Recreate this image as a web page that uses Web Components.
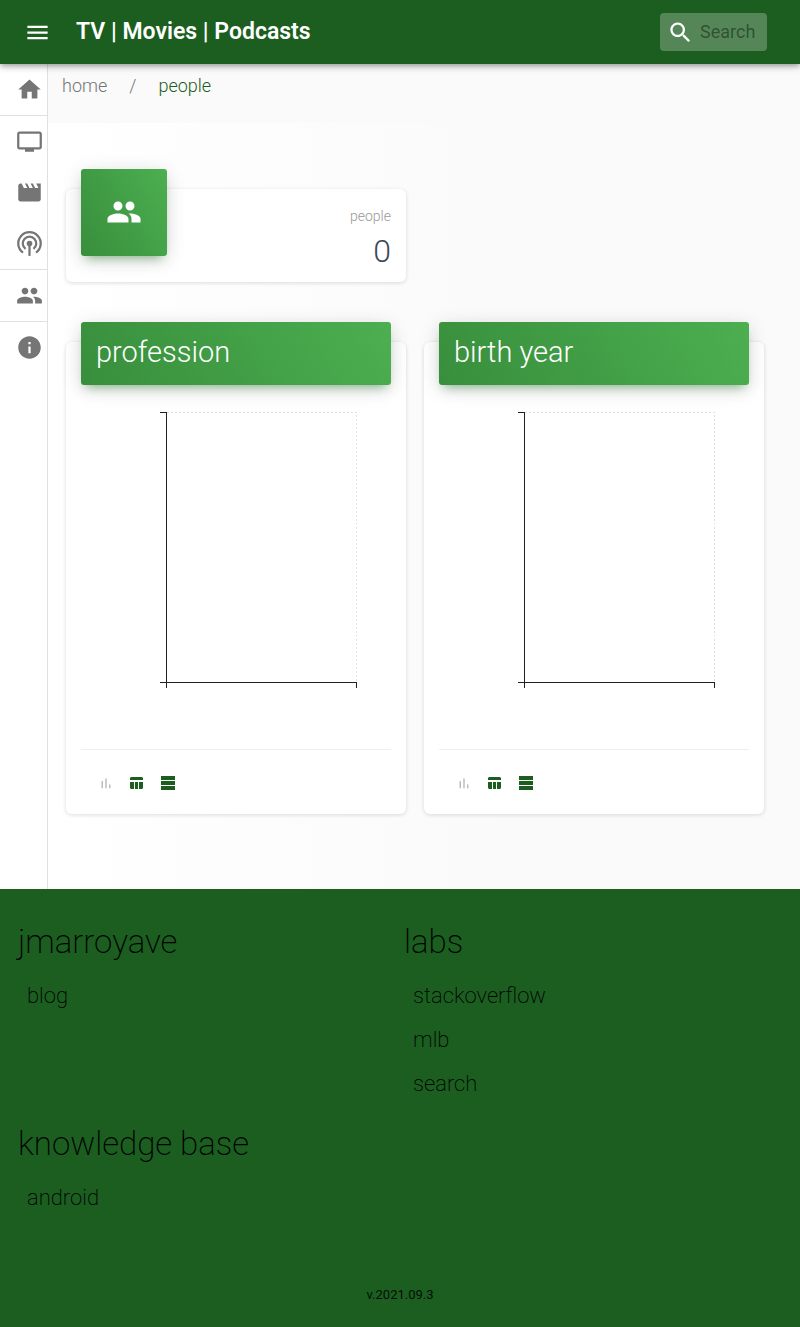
<!DOCTYPE html>
<html lang="en">
<head>
<meta charset="utf-8">
<meta name="viewport" content="width=device-width, initial-scale=1">
<title>TV | Movies | Podcasts</title>
<style>
  body { margin: 0; background: #fafafa; font-family: Roboto, sans-serif; font-weight: 300; --brand: #1b5e20; }
</style>
</head>
<body>
<media-app></media-app>
<script>
const ICONS = {
  menu: '<path d="M3 18h18v-2H3v2zm0-5h18v-2H3v2zm0-7v2h18V6H3z"/>',
  search: '<path d="M15.5 14h-.79l-.28-.27C15.41 12.59 16 11.11 16 9.5 16 5.91 13.09 3 9.5 3S3 5.91 3 9.5 5.91 16 9.5 16c1.61 0 3.09-.59 4.23-1.57l.27.28v.79l5 4.99L20.49 19l-4.99-5zm-6 0C7.01 14 5 11.99 5 9.5S7.01 5 9.5 5 14 7.01 14 9.5 11.99 14 9.5 14z"/>',
  home: '<path d="M10 20v-6h4v6h5v-8h3L12 3 2 12h3v8z"/>',
  tv: '<path d="M21 3H3c-1.1 0-2 .9-2 2v12c0 1.1.9 2 2 2h5v2h8v-2h5c1.1 0 1.99-.9 1.99-2L23 5c0-1.100-.9-2-2-2zm0 14H3V5h18v12z"/>',
  movie: '<path d="M18 4l2 4h-3l-2-4h-2l2 4h-3l-2-4H8l2 4H7L5 4H4c-1.100 0-1.990.9-1.990 2L2 18c0 1.100.9 2 2 2h16c1.100 0 2-.9 2-2V4h-4z"/>',
  podcast: '<g fill="none" stroke="currentColor" stroke-width="2"><path d="M6.200 20.100A10 10 0 1 1 17.800 20.100"/><path d="M8.500 16.800A6 6 0 1 1 15.500 16.800"/><path d="M12 13v10"/></g><circle cx="12" cy="12" r="2.500"/>',
  people: '<path d="M16 11c1.660 0 2.990-1.340 2.990-3S17.660 5 16 5c-1.660 0-3 1.340-3 3s1.340 3 3 3zm-8 0c1.660 0 2.990-1.340 2.990-3S9.660 5 8 5C6.340 5 5 6.340 5 8s1.340 3 3 3zm0 2c-2.330 0-7 1.170-7 3.500V19h14v-2.500c0-2.330-4.670-3.500-7-3.500zm8 0c-.290 0-.620.020-.970.050 1.160.840 1.970 1.970 1.970 3.450V19h6v-2.500c0-2.330-4.670-3.500-7-3.500z"/>',
  info: '<path d="M12 2C6.480 2 2 6.480 2 12s4.480 10 10 10 10-4.480 10-10S17.520 2 12 2zm1 15h-2v-6h2v6zm0-8h-2V7h2v2z"/>',
  bars: '<path d="M6 9.300h2V19H6zM11 6h2v13h-2zm5 8h2v5h-2z"/>',
  table: '<g transform="scale(1.3333)"><path d="M2 6V4.500C2 3.700 2.700 3 3.500 3h10c.8 0 1.500.7 1.500 1.500V6zM2 8h4v7H3.500C2.700 15 2 14.300 2 13.500zM7 8h3v7H7zM11 8h4v5.500c0 .8-.7 1.500-1.500 1.500H11z"/></g>',
  rows: '<g transform="scale(1.3333)"><path d="M2 2h14v4H2zM2 7h14v4H2zM2 12h14v4H2z"/></g>'
};

function define(name, html) {
  customElements.define(name, class extends HTMLElement {
    constructor() {
      super();
      this.attachShadow({ mode: 'open' }).innerHTML = typeof html === 'function' ? '' : html;
    }
    connectedCallback() {
      if (typeof html === 'function') this.shadowRoot.innerHTML = html(this);
    }
  });
}

define('md-icon', el => `
  <style>:host{display:block;width:var(--icon-size,24px);height:var(--icon-size,24px)} svg{display:block;width:100%;height:100%;fill:currentColor}</style>
  <svg viewBox="0 0 24 24" aria-hidden="true">${ICONS[el.getAttribute('name')]}</svg>`);

define('app-bar', `
  <style>
    :host{display:block;position:relative;z-index:2;background:var(--brand);color:#fff;
      box-shadow:0 2px 4px -1px rgba(0,0,0,.2),0 4px 5px 0 rgba(0,0,0,.14),0 1px 10px 0 rgba(0,0,0,.12)}
    header{display:flex;align-items:center;height:64px;padding:0 33px 0 24px;--icon-size:27px}
    button{border:0;background:none;color:inherit;padding:0;margin-right:25px;cursor:pointer}
    h1{margin:0;font-size:23px;line-height:32px;font-weight:600;flex:1;white-space:nowrap}
    label{display:flex;align-items:center;gap:6px;box-sizing:border-box;width:107px;height:38px;padding:0 7px;
      border-radius:4px;background:rgba(255,255,255,.25)}
    input{flex:1;min-width:0;border:0;outline:0;padding:0;background:none;color:inherit;font:400 18px/24px Roboto,sans-serif}
    input::placeholder{color:rgba(0,0,0,.42);opacity:1}
  </style>
  <header>
    <button aria-label="Open menu"><md-icon name="menu"></md-icon></button>
    <h1>TV | Movies | Podcasts</h1>
    <label><md-icon name="search"></md-icon><input type="text" placeholder="Search" aria-label="Search"></label>
  </header>`);

define('side-nav', `
  <style>
    :host{display:block;background:#fff;border-right:1px solid #e0e0e0;--icon-size:27px}
    ul{list-style:none;margin:0;padding:0}
    li.end{border-bottom:1px solid #e0e0e0}
    a{display:flex;align-items:center;height:51px;padding-left:16px;color:#757575}
  </style>
  <nav aria-label="Sections"><ul>
    <li class="end"><a href="#home" aria-label="home"><md-icon name="home"></md-icon></a></li>
    <li><a href="#tv" aria-label="tv"><md-icon name="tv"></md-icon></a></li>
    <li><a href="#movies" aria-label="movies"><md-icon name="movie"></md-icon></a></li>
    <li class="end"><a href="#podcasts" aria-label="podcasts"><md-icon name="podcast"></md-icon></a></li>
    <li class="end"><a href="#people" aria-label="people"><md-icon name="people"></md-icon></a></li>
    <li><a href="#about" aria-label="about"><md-icon name="info"></md-icon></a></li>
  </ul></nav>`);

define('bread-crumbs', `
  <style>
    :host{display:block;padding:10px 14px 25px}
    nav{display:flex;gap:22px;font-size:18px;line-height:24px;color:#757575}
    a{color:inherit;text-decoration:none}
    a[aria-current]{color:var(--brand)}
  </style>
  <nav aria-label="Breadcrumb"><a href="#home">home</a><span>/</span><a href="#people" aria-current="page">people</a></nav>`);

const CARD = `:host{display:block;background:#fff;border-radius:6px;padding:0 15px;box-shadow:0 1px 4px 0 rgba(0,0,0,.14)}`;
const RAISED = `background:linear-gradient(60deg,#388e3c,#4caf50);color:#fff;border-radius:3px;margin-top:-20px;
  box-shadow:0 4px 20px 0 rgba(0,0,0,.14),0 7px 10px -5px rgba(56,142,60,.5)`;

define('stat-card', el => `
  <style>
    ${CARD}
    .row{display:flex;justify-content:space-between;height:93px}
    .badge{${RAISED};display:grid;place-items:center;box-sizing:border-box;width:86px;height:87px;padding-bottom:2px;--icon-size:36px}
    dl{margin:0;padding-top:16px;text-align:right}
    dt{font-size:14px;line-height:22px;color:#999}
    dd{margin:4px 0 0;font-size:32px;line-height:40px;color:#3c4858}
  </style>
  <div class="row"><div class="badge"><md-icon name="${el.getAttribute('icon')}"></md-icon></div>
  <dl><dt><slot></slot></dt><dd><slot name="value"></slot></dd></dl></div>`);

define('chart-card', `
  <style>
    ${CARD}
    h2{${RAISED};margin-bottom:0;padding:12px 15px 15px;font-size:29px;line-height:36px;font-weight:300}
    svg{display:block;width:100%;height:auto;margin-top:27px}
    .tools{display:flex;gap:13px;margin-top:60px;padding:24px 16px 22px;border-top:1px solid #eee;--icon-size:18px;color:var(--brand)}
    button{border:0;background:none;padding:0;color:inherit;cursor:pointer}
    button:disabled{color:rgba(0,0,0,.26);cursor:default}
  </style>
  <h2><slot></slot></h2>
  <svg viewBox="0 0 310 277" fill="none" shape-rendering="crispEdges" role="img" aria-label="Empty chart">
    <path d="M85.500 .5h190v270" stroke="#e0e0e0" stroke-dasharray="2 2"/>
    <path d="M79 .5h6.500V276M79 270.500h196.500V276" stroke="#212121"/>
  </svg>
  <div class="tools">
    <button disabled aria-label="Chart"><md-icon name="bars"></md-icon></button>
    <button aria-label="Table"><md-icon name="table"></md-icon></button>
    <button aria-label="Rows"><md-icon name="rows"></md-icon></button>
  </div>`);

define('link-group', `
  <style>
    :host{display:block}
    h2{margin:0 0 11px;font-size:33px;line-height:42px;font-weight:200}
    div{display:flex;flex-direction:column;align-items:flex-start;padding-left:9px}
    ::slotted(a){font-size:22px;line-height:44px;font-weight:200;color:inherit;text-decoration:none}
  </style>
  <h2><slot name="title"></slot></h2><div><slot></slot></div>`);

define('page-footer', `
  <style>
    :host{display:block;background:var(--brand);color:#000;padding:32px 10px 22px 18px}
    .groups{display:grid;grid-template-columns:1fr 1fr;row-gap:17px}
    p{margin:65px 0 0;padding-right:8px;text-align:center;font-size:13px;line-height:20px;font-weight:400;color:rgba(0,0,0,.87)}
  </style>
  <footer>
    <div class="groups">
      <link-group><span slot="title">jmarroyave</span><a href="#blog">blog</a></link-group>
      <link-group><span slot="title">labs</span><a href="#stackoverflow">stackoverflow</a><a href="#mlb">mlb</a><a href="#search">search</a></link-group>
      <link-group><span slot="title">knowledge base</span><a href="#android">android</a></link-group>
    </div>
    <p>v.2021.09.3</p>
  </footer>`);

define('media-app', `
  <style>
    :host{display:block}
    .body{display:grid;grid-template-columns:48px 1fr}
    .content{background:linear-gradient(90deg,#fff,#fafafa 60%)}
    bread-crumbs{background:#fafafa}
    .cards{display:grid;gap:60px;padding:66px 36px 75px 18px}
    .row{display:grid;grid-template-columns:1fr 1fr;gap:18px}
  </style>
  <app-bar></app-bar>
  <div class="body">
    <side-nav></side-nav>
    <main class="content">
      <bread-crumbs></bread-crumbs>
      <div class="cards">
        <div class="row"><stat-card icon="people">people<span slot="value">0</span></stat-card></div>
        <div class="row"><chart-card>profession</chart-card><chart-card>birth year</chart-card></div>
      </div>
    </main>
  </div>
  <page-footer></page-footer>`);
</script>
</body>
</html>
